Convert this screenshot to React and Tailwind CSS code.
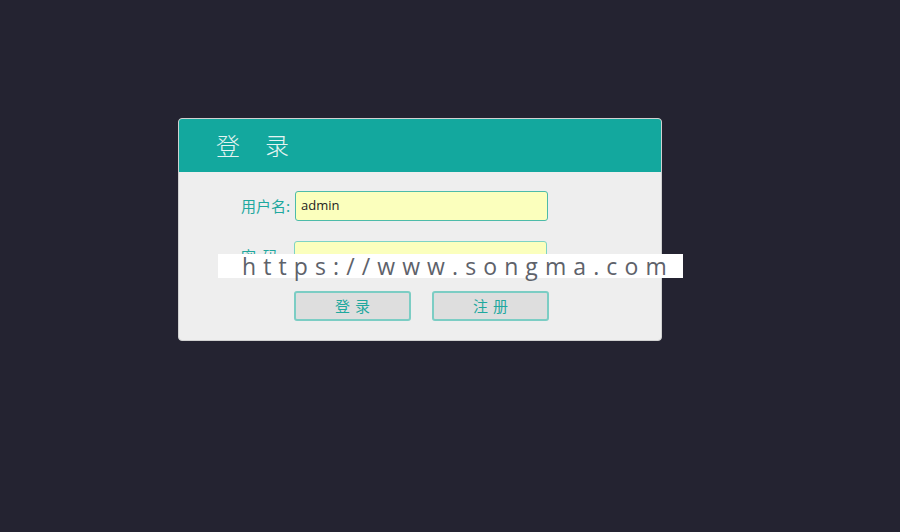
export default function App() {
  return (
    <div className="relative min-h-[532px] w-full bg-[#242331] pt-[118px] pl-[178px]" style={{ fontFamily: '"Noto Sans", "Noto Sans CJK SC", sans-serif' }}>
      <div className="w-[484px] h-[223px] rounded-[4px] border border-[#d0d0d0] bg-[#eeeeee] overflow-hidden">
        <div className="h-[53px] bg-[#13a89e] flex items-center pl-[37px] pb-[2px]">
          <span className="text-[24px] leading-none text-[#e6f4f2] font-light tracking-[25px]" style={{ fontFamily: '"Noto Sans CJK SC", sans-serif' }}>登录</span>
        </div>
        <div className="pt-[19px]">
          <div className="flex items-center h-[30px] pl-[62px]">
            <span className="text-[15px] text-[#1fa89e] w-[54px]" style={{ fontFamily: '"Noto Sans CJK SC", sans-serif' }}>用户名:</span>
            <div className="w-[253px] h-[30px] rounded-[3px] border border-[#4dbba9] bg-[#fbffbd] flex items-center pl-[5px] text-[13px] text-[#222]" style={{ fontFamily: '"Open Sans", sans-serif' }}>admin</div>
          </div>
          <div className="flex items-center h-[30px] pl-[62px] mt-[20px]">
            <span className="text-[15px] text-[#1fa89e] w-[53px] whitespace-pre" style={{ fontFamily: '"Noto Sans CJK SC", sans-serif' }}>密  码:</span>
            <div className="w-[253px] h-[30px] rounded-[3px] border border-[#7ed3c4] bg-[#fbffbd]"></div>
          </div>
          <div className="flex pl-[115px] mt-[20px] gap-[21px]">
            <button className="w-[117px] h-[30px] rounded-[3px] border-2 border-[#7ccdc4] bg-[#dedede] text-[15px] text-[#1fa89e] tracking-[5px] pl-[5px]" style={{ fontFamily: '"Noto Sans CJK SC", sans-serif' }}>登录</button>
            <button className="w-[117px] h-[30px] rounded-[3px] border-2 border-[#7ccdc4] bg-[#dedede] text-[15px] text-[#1fa89e] tracking-[5px] pl-[5px]" style={{ fontFamily: '"Noto Sans CJK SC", sans-serif' }}>注册</button>
          </div>
        </div>
      </div>
      <div className="absolute left-[218px] top-[254px] w-[465px] h-[24px] bg-white flex items-center pl-[24px]">
        <span className="text-[23px] leading-none text-[#5e626a] tracking-[7.1px] whitespace-nowrap" style={{ fontFamily: '"Open Sans", sans-serif' }}>https://www.songma.com</span>
      </div>
    </div>
  );
}
